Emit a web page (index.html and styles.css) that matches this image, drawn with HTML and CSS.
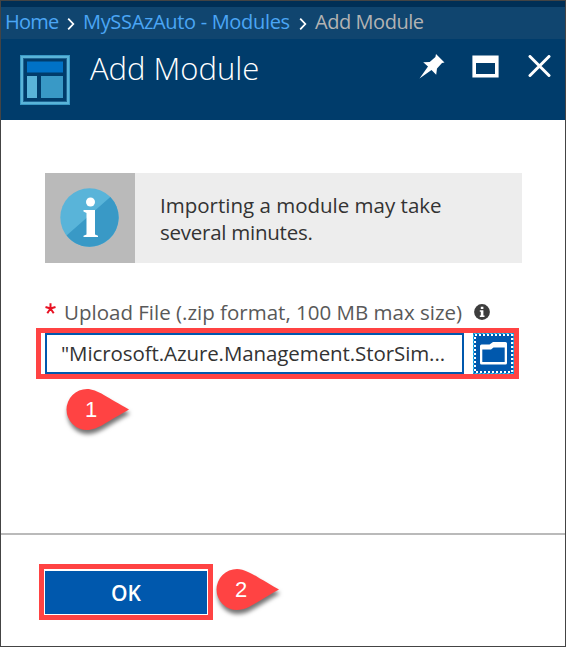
FILE: index.html
```html
<!DOCTYPE html>
<html lang="en">
<head>
<meta charset="utf-8">
<title>Add Module</title>
<link rel="stylesheet" href="styles.css">
</head>
<body>
<main class="blade">
  <div class="topbar"></div>
  <nav class="crumbs">
    <a class="c-home">Home</a>
    <svg class="chev" width="8" height="14" viewBox="0 0 8 14"><path d="M1.2 1.6 6.3 7l-5.1 5.4"/></svg>
    <a class="c-mod">MySSAzAuto - Modules</a>
    <svg class="chev" width="8" height="14" viewBox="0 0 8 14"><path d="M1.2 1.6 6.3 7l-5.1 5.4"/></svg>
    <span class="c-here">Add Module</span>
  </nav>
  <header class="head">
    <svg class="logo" width="50" height="50" viewBox="0 0 50 50">
      <path fill="#3999c6" d="M0 0h50v50H0z"/><path fill="#59b4d9" d="M1 1h48v48H1z"/>
      <path fill="#1e6493" d="M3 3h44v44H3z"/><path fill="#003c6b" d="M4 4h42v42H4z"/>
      <path fill="#0072c6" d="M7 6.500h36v11H7z"/><path fill="#59b4d9" d="M7 21h10v22H7z"/>
      <path fill="#3999c6" d="M21 21h22v22H21z"/>
    </svg>
    <h1>Add Module</h1>
    <div class="tools">
      <svg width="26" height="26" viewBox="0 0 26 26"><path fill="#fff" d="M17 1l8.500 8.500-2.500.5-5 5.500-.8 6.200-4.700-4.700L.5 25.500 9 13.500l-4.800-4.200 6.500-.4 5.700-5z"/></svg>
      <svg width="27" height="23" viewBox="0 0 27 23"><path fill="#fff" fill-rule="evenodd" d="M.4.4h26.200v22.200H.4zM4 8v11h19V8z"/></svg>
      <svg width="23" height="22" viewBox="0 0 23 22"><path fill="none" stroke="#fff" stroke-width="3" stroke-linecap="round" d="M2 1.500l19 19M21 1.500l-19 19"/></svg>
    </div>
  </header>
  <section class="content">
    <div class="notice">
      <div class="notice-icon">
        <svg width="60" height="60" viewBox="0 0 60 60">
          <circle cx="29.500" cy="29.500" r="29.200" fill="#59b4d9"/>
          <path fill="#3999c6" d="M50.300 9A29.200 29.200 0 1 1 6.550 47.560z"/>
          <circle cx="30.500" cy="14" r="4.500" fill="#fff"/>
          <path fill="#fff" d="M23.500 22H35v24.500l3 1.200V49H23.500v-1.300l3-1.200V25l-3-1.500z"/>
        </svg>
      </div>
      <p>Importing a module may take<br><span class="n2">several minutes.</span></p>
    </div>
    <div class="label">
      <svg class="star" width="11" height="11" viewBox="0 0 11 11"><path d="M5.500 5.500V.2M5.500 5.500L.5 4M5.500 5.500l5-1.500M5.500 5.500l-3.200 4.700M5.500 5.500l3.200 4.700"/></svg>
      <span class="l-text">Upload File (.zip format, 100 MB max size)</span>
      <svg class="info" width="16" height="16" viewBox="0 0 16 16"><circle cx="8" cy="8" r="7.900" fill="#3d3d3d"/><path fill="#fff" d="M6.800 2.800h2.600V5H6.800zM5.800 6.200h3.600v5.300h1.100V13H5.800v-1.500h1V7.700h-1z"/></svg>
    </div>
    <div class="upload">
      <div class="field"><span>"Microsoft.Azure.Management.StorSim...</span></div>
      <div class="browse">
        <svg width="41" height="41" viewBox="0 0 41 41">
          <path fill="#0058ad" d="M0 0h41v41H0z"/>
          <path fill="none" stroke="#31c5f4" stroke-width="1" stroke-dasharray="3 1" d="M.5.500h40v40H.5z"/>
          <path fill="none" stroke="#fff" stroke-width="2" stroke-dasharray="2 2" d="M2 2h37v37H2z"/>
          <path fill="#fff" fill-rule="evenodd" d="M8.500 11.500h8l3.500-2.500h12.500q1.500 0 1.500 1.500v19.500q0 1.500-1.500 1.500h-24Q7 31.500 7 30V13q0-1.500 1.500-1.500zM9.300 16.500V29h22.400V14.500H20.500l-2.500 2z"/>
        </svg>
      </div>
    </div>
    <div class="pin pin-one">
      <svg width="64" height="42" viewBox="0 0 64 42"><path d="M21 0C31 0 42 9 63 20.500 42 32 32 41 21 41a20.500 20.500 0 0 1 0-41z"/></svg><b>1</b>
    </div>
  </section>
  <footer class="foot">
    <div class="ok-frame"><div class="ok">OK</div></div>
    <div class="pin pin-two">
      <svg width="64" height="42" viewBox="0 0 64 42"><path d="M21 0C31 0 42 9 63 20.500 42 32 32 41 21 41a20.500 20.500 0 0 1 0-41z"/></svg><b>2</b>
    </div>
  </footer>
</main>
</body>
</html>
```
FILE: styles.css
```css
* { box-sizing: border-box; }
body { margin: 0; font-family: "Open Sans", "Noto Sans", sans-serif; }
svg { display: block; flex: none; }
.blade {
  width: 566px; height: 647px; border: 1px solid #444; background: #fff;
  display: flex; flex-direction: column; overflow: hidden; white-space: nowrap;
}
.topbar { height: 6px; background: #002f56; }
.crumbs {
  height: 32px; background: #10456f; display: flex; align-items: center;
  padding: 0 0 2px 4px; font-size: 20px; line-height: 28px; color: #4ba6f5;
}
.c-home { width: 62px; letter-spacing: -.8px; }
.c-mod { width: 216px; margin-left: 8px; letter-spacing: -.32px; }
.c-here { margin-left: 8px; color: #b3b3b3; letter-spacing: -.45px; }
.chev { position: relative; top: 2px; fill: none; stroke: #fff; stroke-width: 1.800; }
.head { height: 81px; background: #003c6b; display: flex; padding-left: 19px; }
.logo { margin-top: 16px; }
h1 {
  margin: 7px 0 0 20px; font-size: 31px; line-height: 44px; font-weight: 300;
  color: #fff;
}
.tools { margin: 14px 14px 0 auto; height: 26px; display: flex; align-items: center; gap: 28px; }
.tools svg:first-child { margin-right: -1px; }
.tools svg:nth-child(2) { margin-right: 1px; }
.content { height: 413px; padding: 53px 43px 0 35px; }
.notice { height: 90px; margin-left: 9px; display: flex; background: #ededed; }
.notice-icon { width: 90px; padding: 15px; background: #bababa; }
.notice p { margin: 19px 0 0 25px; font-size: 20.500px; line-height: 27px; color: #333; }
.n2 { letter-spacing: -.25px; }
.label { height: 30px; margin: 34px 0 1px 9px; display: flex; align-items: center; color: #595959; font-size: 20.500px; }
.star { margin: -7px 8px 0 0; fill: none; stroke: #e81123; stroke-width: 2; }
.info { margin-left: auto; margin-right: 32px; }
.upload {
  width: 483px; height: 51px; border: 5px solid #ff4343;
  padding-left: 4px; display: flex; gap: 9px;
}
.field {
  width: 419px; height: 41px; border: 2px solid #0058ad; padding-left: 14px;
  font-size: 20.500px; letter-spacing: -.09px; line-height: 37px; color: #333;
}
.pin { position: relative; width: 64px; height: 42px; }
.pin svg { fill: #ff4343; filter: drop-shadow(1px 4px 2px rgba(0, 0, 0, .55)); }
.pin b {
  position: absolute; left: 0; top: 0; width: 50px; text-align: center;
  font: 400 22px/42px "Liberation Sans", sans-serif; color: #fff;
}
.pin-one { margin: 10px 0 0 30px; }
.foot { height: 112px; border-top: 2px solid #bababa; padding: 29px 0 0 38px; display: flex; }
.ok-frame { width: 174px; height: 56px; border: 5px solid #ff4343; padding: 2px 1px 1px; }
.ok {
  height: 43px; background: #0058ad; color: #fff; text-align: center;
  font-size: 21px; line-height: 44px; font-weight: 600;
}
.pin-two { margin: 5px 0 0 3px; }
```
